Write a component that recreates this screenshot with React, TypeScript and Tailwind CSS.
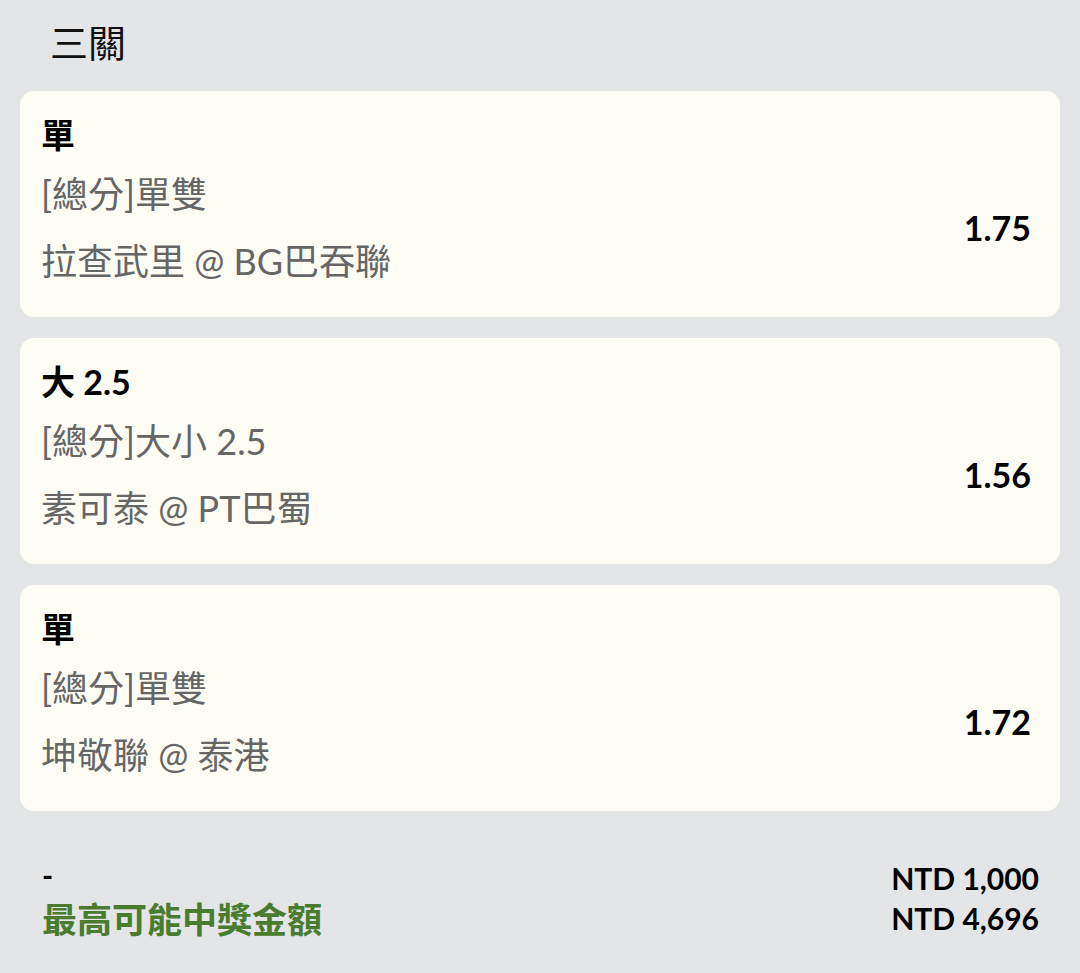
import React from "react";

type Bet = { pick: string; market: string; match: string; odds: string };

const bets: Bet[] = [
  { pick: "單", market: "[總分]單雙", match: "拉查武里 @ BG巴吞聯", odds: "1.75" },
  { pick: "大 2.5", market: "[總分]大小 2.5", match: "素可泰 @ PT巴蜀", odds: "1.56" },
  { pick: "單", market: "[總分]單雙", match: "坤敬聯 @ 泰港", odds: "1.72" },
];

function Card({ bet }: { bet: Bet }) {
  return (
    <div className="flex h-[226px] flex-col rounded-[14px] bg-[#fdfdf6] pl-[21px] pr-[29px] pt-[20px]">
      <div className="h-[48px] text-[34px] font-bold leading-[48px] text-black">{bet.pick}</div>
      <div className="mt-[2px] flex items-center justify-between">
        <div className="flex flex-col text-[36px] leading-[67px] text-[#666666]">
          <div>{bet.market}</div>
          <div>{bet.match}</div>
        </div>
        <div className="text-[34px] font-bold leading-[40px] text-black">{bet.odds}</div>
      </div>
    </div>
  );
}

export default function App() {
  return (
    <div className="min-h-[973px] w-[1080px] bg-[#e4e5e7] px-[20px] font-['Lato','Noto_Sans_CJK_TC',sans-serif]">
      <div className="box-content h-[56px] pl-[30px] pt-[13px] font-['Noto_Sans_CJK_TC',sans-serif] text-[38px] leading-[56px] text-[#111111]">
        三關
      </div>
      <div className="mt-[22px] flex flex-col gap-[21px]">
        {bets.map((b, i) => (
          <Card key={i} bet={b} />
        ))}
      </div>
      <div className="mt-[47px] flex justify-between pl-[22px] pr-[21px]">
        <div className="flex flex-col">
          <div className="h-[34px] text-[30px] font-bold leading-[34px] text-black">-</div>
          <div className="mt-[6px] h-[40px] font-['Noto_Sans_CJK_TC',sans-serif] text-[35px] font-bold leading-[40px] text-[#4a7c2f]">
            最高可能中獎金額
          </div>
        </div>
        <div className="flex flex-col items-end">
          <div className="h-[40px] text-[30px] font-bold leading-[40px] text-black">NTD 1,000</div>
          <div className="h-[40px] text-[30px] font-bold leading-[40px] text-black">NTD 4,696</div>
        </div>
      </div>
    </div>
  );
}
